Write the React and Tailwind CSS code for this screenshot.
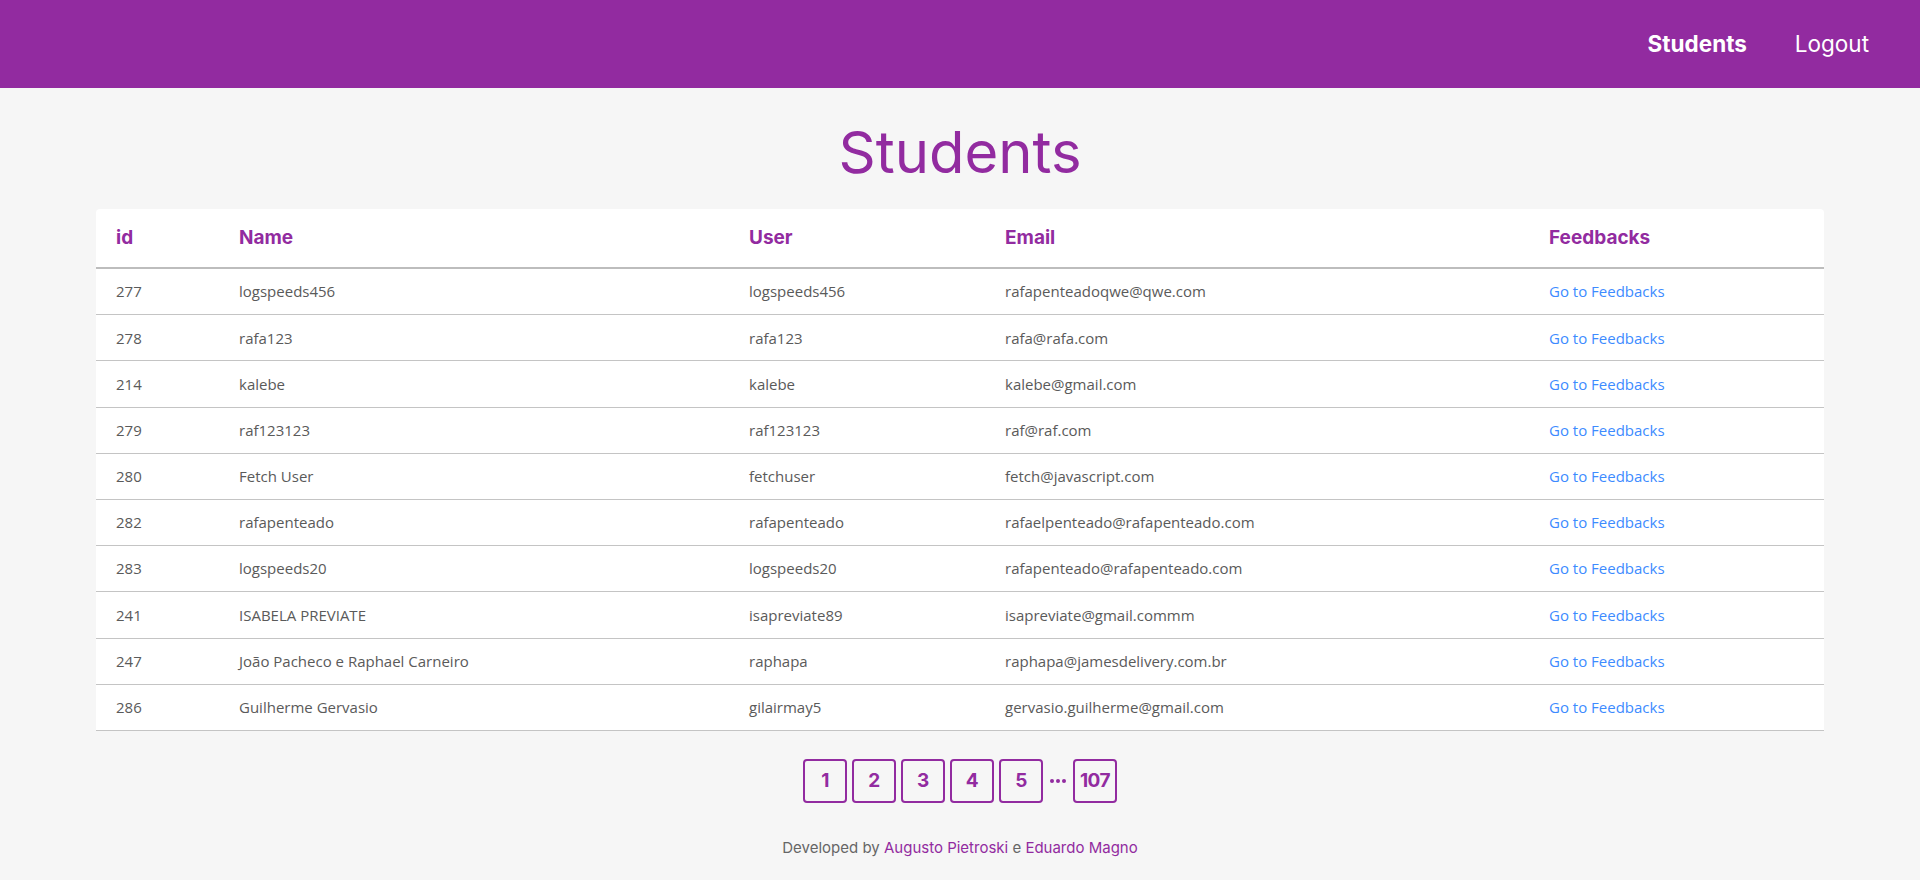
import React from "react";

const rows = [
  ["277", "logspeeds456", "logspeeds456", "rafapenteadoqwe@qwe.com"],
  ["278", "rafa123", "rafa123", "rafa@rafa.com"],
  ["214", "kalebe", "kalebe", "kalebe@gmail.com"],
  ["279", "raf123123", "raf123123", "raf@raf.com"],
  ["280", "Fetch User", "fetchuser", "fetch@javascript.com"],
  ["282", "rafapenteado", "rafapenteado", "rafaelpenteado@rafapenteado.com"],
  ["283", "logspeeds20", "logspeeds20", "rafapenteado@rafapenteado.com"],
  ["241", "ISABELA PREVIATE", "isapreviate89", "isapreviate@gmail.commm"],
  ["247", "João Pacheco e Raphael Carneiro", "raphapa", "raphapa@jamesdelivery.com.br"],
  ["286", "Guilherme Gervasio", "gilairmay5", "gervasio.guilherme@gmail.com"],
];

const grid = "grid grid-cols-[123px_510px_256px_544px_295px]";
const head = "font-['Inter',sans-serif]";
const body = "font-['Open_Sans','Noto_Sans',sans-serif]";

function PageBtn({ children }) {
  return (
    <button className={`${head} w-[44px] h-[44px] flex items-center justify-center border-2 border-[#922ba0] rounded-[4px] text-[#922ba0] text-[19px] font-bold tracking-[-0.5px] bg-transparent`}>
      {children}
    </button>
  );
}

export default function App() {
  return (
    <div className="min-h-[880px] bg-[#f6f6f6] flex flex-col">
      <nav className={`${head} h-[88px] bg-[#922ba0] flex items-center justify-end gap-[48px] pr-[51px] text-white text-[22.5px]`}>
        <a className="font-bold">Students</a>
        <a className="font-normal">Logout</a>
      </nav>

      <h1 className={`${head} text-center text-[#922ba0] text-[58px] font-normal leading-none mt-[35px] mb-[28px]`}>
        Students
      </h1>

      <div className="mx-auto w-[1728px] bg-white rounded-t-[4px]">
        <div className={`${grid} ${head} h-[60px] items-center border-b-2 border-[#bdbdbd] text-[#922ba0] text-[19px] font-bold`}>
          <div className="pl-[20px]">id</div>
          <div className="pl-[20px]">Name</div>
          <div className="pl-[20px]">User</div>
          <div className="pl-[20px]">Email</div>
          <div className="pl-[20px]">Feedbacks</div>
        </div>
        {rows.map((r) => (
          <div key={r[0]} className={`${grid} ${body} h-[46.2px] items-center border-b border-[#c4c4c4] text-[#5a5a5a] text-[15px]`}>
            <div className="pl-[20px]">{r[0]}</div>
            <div className="pl-[20px]">{r[1]}</div>
            <div className="pl-[20px]">{r[2]}</div>
            <div className="pl-[20px]">{r[3]}</div>
            <div className="pl-[20px] text-[#3d8bff]">Go to Feedbacks</div>
          </div>
        ))}
      </div>

      <div className="flex justify-center items-center gap-[5px] mt-[28px]">
        <PageBtn>1</PageBtn>
        <PageBtn>2</PageBtn>
        <PageBtn>3</PageBtn>
        <PageBtn>4</PageBtn>
        <PageBtn>5</PageBtn>
        <div className="flex items-center gap-[2px] w-[20px] justify-center">
          <span className="w-[4px] h-[4px] rounded-full bg-[#922ba0]"></span>
          <span className="w-[4px] h-[4px] rounded-full bg-[#922ba0]"></span>
          <span className="w-[4px] h-[4px] rounded-full bg-[#922ba0]"></span>
        </div>
        <PageBtn>107</PageBtn>
      </div>

      <footer className={`${head} text-center text-[15px] leading-[24px] text-[#666] mt-[33px]`}>
        Developed by <a className="text-[#922ba0]">Augusto Pietroski</a> e <a className="text-[#922ba0]">Eduardo Magno</a>
      </footer>
    </div>
  );
}
